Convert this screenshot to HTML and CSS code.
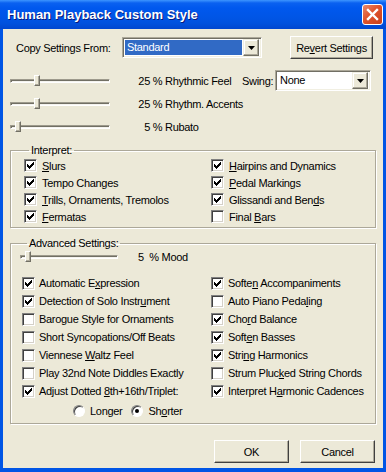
FILE: index.html
```html
<!DOCTYPE html>
<html lang="en">
<head>
    <meta charset="UTF-8">
    <title>Human Playback Custom Style</title>
    <link rel="stylesheet" href="styles.css">
</head>
<body>
<div class="window">
    <div class="titlebar">
        <span class="title">Human Playback Custom Style</span>
        <span class="close"><svg width="21" height="21" viewBox="0 0 21 21"><path d="M6 6 L15 15 M15 6 L6 15" stroke="#fff" stroke-width="2.4" stroke-linecap="square"/></svg></span>
    </div>
    <div class="client">
        <div class="copy-row">
            <span class="copy-label">Copy Settings From:</span>
            <div class="combo combo-copy">
                <span class="combo-text selected">Standard</span>
                <span class="drop"><svg width="7" height="4" viewBox="0 0 7 4"><polygon points="0,0 7,0 3.5,4" fill="#000"/></svg></span>
            </div>
            <button class="btn btn-revert">Re<u>v</u>ert Settings</button>
        </div>

        <div class="slider-row">
            <div class="slider"><div class="track"></div><div class="thumb" style="left:24px"></div></div>
            <span class="pct"><span class="num">25</span> % Rhythmic Feel</span>
            <span class="swing-label">Swing:</span>
            <div class="combo combo-swing">
                <span class="combo-text">None</span>
                <span class="drop"><svg width="7" height="4" viewBox="0 0 7 4"><polygon points="0,0 7,0 3.5,4" fill="#000"/></svg></span>
            </div>
        </div>
        <div class="slider-row">
            <div class="slider"><div class="track"></div><div class="thumb" style="left:24px"></div></div>
            <span class="pct"><span class="num">25</span> % Rhythm. Accents</span>
        </div>
        <div class="slider-row">
            <div class="slider"><div class="track"></div><div class="thumb" style="left:5px"></div></div>
            <span class="pct"><span class="num">5</span> % Rubato</span>
        </div>

        <fieldset class="group group-interpret">
            <legend>Interpret:</legend>
            <div class="checks">
                <label class="check"><span class="box on"></span><span><u>S</u>lurs</span></label>
                <label class="check"><span class="box on"></span><span><u>H</u>airpins and Dynamics</span></label>
                <label class="check"><span class="box on"></span><span>Tempo Changes</span></label>
                <label class="check"><span class="box on"></span><span><u>P</u>edal Markings</span></label>
                <label class="check"><span class="box on"></span><span><u>T</u>rills, Ornaments, Tremolos</span></label>
                <label class="check"><span class="box on"></span><span>Glissandi and Ben<u>d</u>s</span></label>
                <label class="check"><span class="box on"></span><span><u>F</u>ermatas</span></label>
                <label class="check"><span class="box"></span><span>Final <u>B</u>ars</span></label>
            </div>
        </fieldset>

        <fieldset class="group group-advanced">
            <legend>Advanced Settings:</legend>
            <div class="mood-row">
                <div class="slider slider-mood"><div class="track"></div><div class="thumb" style="left:5px"></div></div>
                <span class="pct">5&nbsp; % Mood</span>
            </div>
            <div class="checks">
                <label class="check"><span class="box on"></span><span>Automatic E<u>x</u>pression</span></label>
                <label class="check"><span class="box on"></span><span>Softe<u>n</u> Accompaniments</span></label>
                <label class="check"><span class="box on"></span><span>Detection of Solo Instr<u>u</u>ment</span></label>
                <label class="check"><span class="box"></span><span>Auto Piano Peda<u>l</u>ing</span></label>
                <label class="check"><span class="box"></span><span>Barogue Style for Ornaments</span></label>
                <label class="check"><span class="box on"></span><span>Cho<u>r</u>d Balance</span></label>
                <label class="check"><span class="box"></span><span>Short Syncopations/Off Beats</span></label>
                <label class="check"><span class="box on"></span><span>Soft<u>e</u>n Basses</span></label>
                <label class="check"><span class="box"></span><span>Viennese <u>W</u>altz Feel</span></label>
                <label class="check"><span class="box on"></span><span>Stri<u>n</u>g Harmonics</span></label>
                <label class="check"><span class="box"></span><span>Play 32nd Note Diddles Exactly</span></label>
                <label class="check"><span class="box"></span><span>Strum Pluc<u>k</u>ed String Chords</span></label>
                <label class="check"><span class="box on"></span><span>Adjust Dotted <u>8</u>th+16th/Triplet:</span></label>
                <label class="check"><span class="box on"></span><span>Interpret H<u>a</u>rmonic Cadences</span></label>
            </div>
            <div class="radio-row">
                <label class="radio"><span class="dot"></span><span>Longer</span></label>
                <label class="radio"><span class="dot on"></span><span>Sh<u>o</u>rter</span></label>
            </div>
        </fieldset>

        <div class="button-row">
            <button class="btn">OK</button>
            <button class="btn">Cancel</button>
        </div>
    </div>
</div>
</body>
</html>
```

FILE: styles.css
```css
body { margin: 0; background: #fff; }
.window { width: 386px; height: 472px; display: flex; flex-direction: column; background: #0055e5; font-family: "Liberation Sans", Arial, sans-serif; font-size: 11px; letter-spacing: -0.3px; color: #000; }

.titlebar { height: 29px; flex: none; display: flex; align-items: center; justify-content: space-between; padding: 0 3px 0 7px; box-sizing: border-box; background: linear-gradient(to bottom, #3d95ff 0, #0a61f0 3px, #0058ee 8px, #0055e5 18px, #0050dc 24px, #0046cf 29px); }
.title { color: #fff; font-weight: bold; font-size: 13px; letter-spacing: 0; text-shadow: 1px 1px #0a1a7a; }
.close { width: 21px; height: 21px; box-sizing: border-box; border: 1px solid #fff; border-radius: 3px; background: linear-gradient(135deg, #e98a6c 0, #e0532c 45%, #c9401c 100%); display: flex; }
.close svg { margin: -1px; }

.client { flex: 1; margin: 0 3px 4px; background: #ece9d8; display: flex; flex-direction: column; }

.copy-row { display: flex; align-items: center; height: 23px; margin-top: 7px; padding-left: 13px; }
.copy-label { width: 106px; }
.combo { height: 21px; box-sizing: border-box; border: 1px solid; border-color: #aca899 #fff #fff #aca899; box-shadow: inset 1px 1px #716f64, inset -1px -1px #f1efe2; background: #fff; display: flex; align-items: center; padding: 2px; }
.combo-copy { width: 140px; }
.combo-swing { width: 96px; }
.combo-text { flex: 1; height: 15px; line-height: 15px; padding-left: 2px; }
.combo-text.selected { background: #316ac5; color: #fff; }
.drop { width: 16px; height: 17px; box-sizing: border-box; border: 1px solid; border-color: #f1efe2 #716f64 #716f64 #f1efe2; box-shadow: inset -1px -1px #aca899, inset 1px 1px #fff; background: #ece9d8; display: flex; align-items: center; justify-content: center; }
.combo-copy .drop { margin-left: 1px; }

.btn { font: inherit; letter-spacing: inherit; color: #000; background: #ece9d8; width: 75px; height: 23px; padding: 0; border: 1px solid; border-color: #fff #404040 #404040 #fff; box-shadow: inset -1px -1px #aca899; }
.btn-revert { width: 83px; margin-left: 28px; }

.slider-row { display: flex; align-items: center; height: 23px; padding-left: 7px; }
.copy-row + .slider-row { margin-top: 10px; }
.slider { position: relative; width: 100px; height: 11px; margin-right: 28px; display: flex; align-items: center; flex: none; }
.track { width: 100%; height: 4px; box-sizing: border-box; border: 1px solid; border-color: #9d9a8c #fff #fff #9d9a8c; box-shadow: inset 1px 1px #716f64; background: #f4f3ee; }
.thumb { position: absolute; top: 0; width: 6px; height: 11px; box-sizing: border-box; border: 1px solid; border-color: #fff #716f64 #716f64 #fff; box-shadow: inset -1px -1px #aca899; background: #ece9d8; }
.pct { white-space: pre; }
.num { display: inline-block; width: 12px; text-align: right; }
.slider-row .pct { width: 104px; }
.swing-label { width: 33px; }

.group { margin: 0 7px; padding: 0 0 2px 13px; border: 1px solid #aca899; box-shadow: inset 1px 1px #fff, 1px 1px #fff; min-width: 0; }
.group legend { padding: 0 2px; margin-left: 5px; line-height: 13px; }
.group-interpret { margin-top: 6px; }
.group-advanced { margin-top: 9px; padding: 0 0 3px 11px; }

.checks { display: grid; grid-template-columns: 187px 1fr; grid-auto-rows: 17px; }
.group-advanced .checks { grid-template-columns: 189px 1fr; grid-auto-rows: 18px; margin-top: 11px; }
.check { display: flex; align-items: center; gap: 5px; white-space: nowrap; }
.group-advanced .check { gap: 4px; }
.box { width: 13px; height: 13px; box-sizing: border-box; border: 1px solid; border-color: #808080 #fff #fff #808080; box-shadow: inset 1px 1px #404040, inset -1px -1px #d4d0c8; background: #fff; flex: none; }
.box.on { background: #fff url("data:image/svg+xml,%3Csvg xmlns='http://www.w3.org/2000/svg' width='7' height='7' shape-rendering='crispEdges'%3E%3Cpolygon points='0,2 2,4 7,-1 7,2 2,7 0,5' fill='%23000'/%3E%3C/svg%3E") no-repeat 2px 2px; }

.mood-row { display: flex; align-items: center; height: 13px; margin-left: -2px; }
.slider-mood { width: 98px; margin-right: 20px; }

.radio-row { display: flex; align-items: center; height: 18px; margin-top: 2px; padding-left: 51px; }
.radio { display: flex; align-items: center; gap: 5px; margin-right: 9px; }
.dot { width: 12px; height: 12px; box-sizing: border-box; border-radius: 50%; border: 1px solid; border-color: #808080 #fff #fff #808080; box-shadow: inset 1px 1px #404040; background: #fff; position: relative; }
.dot.on::after { content: ""; position: absolute; left: 3px; top: 3px; width: 4px; height: 4px; border-radius: 50%; background: #000; }

.button-row { display: flex; justify-content: flex-end; gap: 11px; padding-right: 8px; margin-top: 16px; }
```
